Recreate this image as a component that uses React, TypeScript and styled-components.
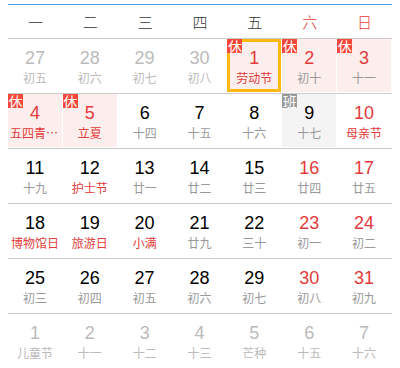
import React from "react";
import styled, { createGlobalStyle, css } from "styled-components";

const GlobalStyle = createGlobalStyle`
    html, body {
        margin: 0;
        padding: 0;
        background: #fff;
    }
    body {
        font-family: "Liberation Sans", Arial, "Noto Sans CJK SC", sans-serif;
    }
`

type Mark = "rest" | "work" | undefined;

interface Day {
    num: number;
    lunar: string;
    other?: boolean;
    red?: boolean;
    fest?: boolean;
    mark?: Mark;
    selected?: boolean;
}

const weekNames = ["一", "二", "三", "四", "五", "六", "日"];

const rows: Day[][] = [
    [
        { num: 27, lunar: "初五", other: true },
        { num: 28, lunar: "初六", other: true },
        { num: 29, lunar: "初七", other: true },
        { num: 30, lunar: "初八", other: true },
        { num: 1, lunar: "劳动节", red: true, fest: true, mark: "rest", selected: true },
        { num: 2, lunar: "初十", red: true, mark: "rest" },
        { num: 3, lunar: "十一", red: true, mark: "rest" },
    ],
    [
        { num: 4, lunar: "五四青年节", red: true, fest: true, mark: "rest" },
        { num: 5, lunar: "立夏", red: true, fest: true, mark: "rest" },
        { num: 6, lunar: "十四" },
        { num: 7, lunar: "十五" },
        { num: 8, lunar: "十六" },
        { num: 9, lunar: "十七", mark: "work" },
        { num: 10, lunar: "母亲节", red: true, fest: true },
    ],
    [
        { num: 11, lunar: "十九" },
        { num: 12, lunar: "护士节", fest: true },
        { num: 13, lunar: "廿一" },
        { num: 14, lunar: "廿二" },
        { num: 15, lunar: "廿三" },
        { num: 16, lunar: "廿四", red: true },
        { num: 17, lunar: "廿五", red: true },
    ],
    [
        { num: 18, lunar: "博物馆日", fest: true },
        { num: 19, lunar: "旅游日", fest: true },
        { num: 20, lunar: "小满", fest: true },
        { num: 21, lunar: "廿九" },
        { num: 22, lunar: "三十" },
        { num: 23, lunar: "初一", red: true },
        { num: 24, lunar: "初二", red: true },
    ],
    [
        { num: 25, lunar: "初三" },
        { num: 26, lunar: "初四" },
        { num: 27, lunar: "初五" },
        { num: 28, lunar: "初六" },
        { num: 29, lunar: "初七" },
        { num: 30, lunar: "初八", red: true },
        { num: 31, lunar: "初九", red: true },
    ],
    [
        { num: 1, lunar: "儿童节", other: true },
        { num: 2, lunar: "十一", other: true },
        { num: 3, lunar: "十二", other: true },
        { num: 4, lunar: "十三", other: true },
        { num: 5, lunar: "芒种", other: true },
        { num: 6, lunar: "十五", other: true },
        { num: 7, lunar: "十六", other: true },
    ],
];

const Calendar = styled.div`
    width: 384px;
    margin: 4px 8px 0;
    border-top: 1px solid #4e9ff0;
`

const WeekRow = styled.div`
    display: grid;
    grid-template-columns: repeat(7, 1fr);
    height: 33px;
    border-bottom: 1px solid #cccccc;
`

const WeekName = styled.div<{ $weekend?: boolean }>`
    display: flex;
    align-items: center;
    justify-content: center;
    font-family: "Noto Sans CJK SC", sans-serif;
    font-size: 15px;
    font-weight: 300;
    color: ${p => p.$weekend ? "#e33a3a" : "#333"};
`

const DayRow = styled.div`
    display: grid;
    grid-template-columns: repeat(7, 1fr);
    height: 55px;
    border-bottom: 1px solid #cccccc;
    box-sizing: border-box;
`

const Cell = styled.div<{ $tone: "rest" | "work" | "none"; $selected?: boolean }>`
    position: relative;
    margin: 0 1px 1px 0;
    box-sizing: border-box;
    padding-top: 8px;
    text-align: center;
    min-width: 0;
    background: ${p => p.$tone === "rest" ? "#fdeeee" : p.$tone === "work" ? "#f4f4f4" : "transparent"};
    ${p => p.$selected && css`
        border: 3px solid #fdb80f;
        padding-top: 5px;
    `}
`

const Num = styled.div<{ $color: string }>`
    font-size: 18px;
    line-height: 22px;
    color: ${p => p.$color};
`

const Lunar = styled.div<{ $color: string }>`
    font-family: "Noto Sans CJK SC", sans-serif;
    font-size: 12px;
    line-height: 17px;
    color: ${p => p.$color};
    padding: 0 2px;
    white-space: nowrap;
    overflow: hidden;
    text-overflow: ellipsis;
`

const Badge = styled.span<{ $kind: "rest" | "work"; $inset?: boolean }>`
    position: absolute;
    top: ${p => p.$inset ? "-3px" : "0"};
    left: ${p => p.$inset ? "-3px" : "0"};
    width: 15px;
    height: 14px;
    font-family: "Noto Sans CJK SC", sans-serif;
    font-size: 14px;
    line-height: 14px;
    text-align: center;
    color: #fff;
    background: ${p => p.$kind === "rest" ? "#f5473a" : "#999"};
`

function DayCell({ day }: { day: Day }) {
    const numColor = day.other ? "#bbb" : day.red ? "#e33a3a" : "#000";
    const lunarColor = day.other ? "#bbb" : day.fest ? "#e33a3a" : "#999";
    return (
        <Cell $tone={day.mark ?? "none"} $selected={day.selected}>
            {day.mark && <Badge $kind={day.mark} $inset={day.selected}>{day.mark === "rest" ? "休" : "班"}</Badge>}
            <Num $color={numColor}>{day.num}</Num>
            <Lunar $color={lunarColor}>{day.lunar}</Lunar>
        </Cell>
    );
}

export default function App() {
    return (
        <>
            <GlobalStyle />
            <Calendar>
                <WeekRow>
                    {weekNames.map((w, i) => <WeekName key={w} $weekend={i > 4}>{w}</WeekName>)}
                </WeekRow>
                {rows.map((r, i) => (
                    <DayRow key={i}>
                        {r.map((d, j) => <DayCell key={j} day={d} />)}
                    </DayRow>
                ))}
            </Calendar>
        </>
    );
}
